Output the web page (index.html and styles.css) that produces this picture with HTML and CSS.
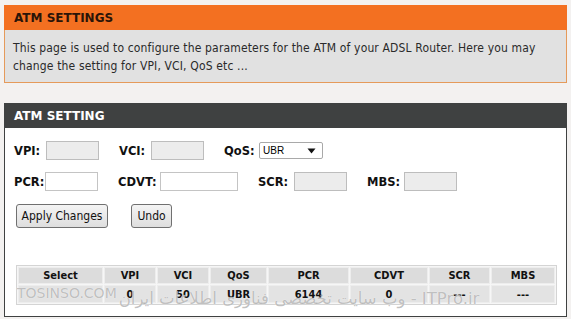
FILE: index.html
```html
<!DOCTYPE html>
<html>
<head>
<meta charset="utf-8">
<link rel="stylesheet" href="styles.css">
</head>
<body>
<div class="page">
  <section class="box box-info">
    <div class="box-head orange">ATM SETTINGS</div>
    <div class="info-body">This page is used to configure the parameters for the ATM of your ADSL Router. Here you may change the setting for VPI, VCI, QoS etc ...</div>
  </section>

  <section class="box box-form">
    <div class="box-head dark">ATM SETTING</div>
    <div class="form-body">
      <div class="row">
        <label class="field"><span class="lbl w32">VPI:</span><span class="inp dis"></span></label>
        <label class="field"><span class="lbl w32">VCI:</span><span class="inp dis"></span></label>
        <label class="field"><span class="lbl w35">QoS:</span>
          <span class="sel"><span>UBR</span><svg width="9" height="6" viewBox="0 0 9 6"><path d="M0.5 0.5 H8.5 L4.5 5.5 Z" fill="#111"/></svg></span>
        </label>
      </div>
      <div class="row row2">
        <label class="field"><span class="lbl w31">PCR:</span><span class="inp"></span></label>
        <label class="field"><span class="lbl w42">CDVT:</span><span class="inp wide"></span></label>
        <label class="field"><span class="lbl w36">SCR:</span><span class="inp dis"></span></label>
        <label class="field"><span class="lbl w37">MBS:</span><span class="inp dis"></span></label>
      </div>
      <div class="buttons">
        <span class="btn apply">Apply Changes</span>
        <span class="btn undo">Undo</span>
      </div>
      <div class="table-wrap">
        <table class="grid">
          <tr>
            <th class="c-sel">Select</th><th class="c-vpi">VPI</th><th class="c-vci">VCI</th><th class="c-qos">QoS</th><th class="c-pcr">PCR</th><th class="c-cdvt">CDVT</th><th class="c-scr">SCR</th><th class="c-mbs">MBS</th>
          </tr>
          <tr>
            <td></td><td>0</td><td>50</td><td>UBR</td><td>6144</td><td>0</td><td>---</td><td>---</td>
          </tr>
        </table>
        <div class="watermark"><span class="wm-en">TOSINSO.COM</span><span class="wm-fa" dir="ltr">وب سایت تخصصی فناوری اطلاعات ایران - ITPro.ir</span></div>
      </div>
    </div>
  </section>
</div>
</body>
</html>
```

FILE: styles.css
```css
html, body {
  margin: 0;
  padding: 0;
  background: #f3f1f0;
}
body {
  font-family: "DejaVu Sans Condensed", "DejaVu Sans", sans-serif;
  color: #222;
}
.page {
  padding: 5px 4px 0 4px;
  display: flex;
  flex-direction: column;
  gap: 20px;
}
.box-info {
  border: 1px solid #e59a5a;
  background: #e1e1e1;
}
.box-head {
  height: 24px;
  display: flex;
  align-items: center;
  padding-left: 9px;
  font-family: "DejaVu Sans", sans-serif;
  font-weight: bold;
  font-size: 12px;
}
.box-head.orange {
  background: #f37021;
  color: #2a1408;
  margin: -1px -1px 0 -1px;
  height: 25px;
  padding-left: 10px;
}
.info-body {
  padding: 9px 8px 7px 8px;
  font-size: 12px;
  line-height: 18px;
  letter-spacing: 0.15px;
  color: #2a2a2a;
}
.box-form {
  border: 1px solid #3f4141;
  background: #fff;
}
.box-head.dark {
  background: #3f4141;
  color: #fff;
}
.form-body {
  padding: 13px 0 11px 9px;
}
.row {
  display: flex;
  align-items: center;
  gap: 20px;
  height: 19px;
  margin-bottom: 12px;
}
.row.row2 {
  margin-bottom: 13px;
}
.field {
  display: flex;
  align-items: center;
}
.lbl {
  font-family: "DejaVu Sans", sans-serif;
  font-weight: bold;
  font-size: 11.5px;
  color: #111;
  white-space: nowrap;
}
.w31 { width: 31px; }
.w32 { width: 32px; }
.w35 { width: 35px; }
.w36 { width: 36px; }
.w37 { width: 37px; }
.w42 { width: 42px; }
.inp {
  width: 53px;
  height: 19px;
  box-sizing: border-box;
  border: 1px solid #c4c4c4;
  background: #fff;
}
.inp.dis {
  background: #ececec;
  border-color: #bdbdbd;
}
.inp.wide { width: 78px; }
.sel {
  width: 64px;
  height: 17px;
  box-sizing: border-box;
  border: 1px solid #a9a9a9;
  border-radius: 2px;
  background: #fff;
  display: flex;
  align-items: center;
  justify-content: space-between;
  padding: 0 6px 0 3px;
  font-family: "Liberation Sans", sans-serif;
  font-size: 10px;
  color: #000;
}
.buttons {
  display: flex;
  gap: 23px;
  padding-left: 2px;
}
.btn {
  height: 24px;
  box-sizing: border-box;
  border: 1px solid #707070;
  border-radius: 3px;
  background: linear-gradient(#f4f4f4, #dedede);
  display: flex;
  align-items: center;
  justify-content: center;
  font-size: 12px;
  color: #111;
}
.btn.apply { width: 92px; }
.btn.undo { width: 41px; }
.table-wrap {
  position: relative;
  margin-top: 37px;
  padding-left: 2px;
}
.grid {
  border-collapse: separate;
  border-spacing: 1px;
  border: 1px solid #d4d4d4;
  background: #f6f6f6;
  font-family: "DejaVu Sans Condensed", "DejaVu Sans", sans-serif;
  font-weight: bold;
  font-size: 11px;
  color: #111;
}
.grid th, .grid td {
  background: #dcdcdc;
  text-align: center;
  padding: 0;
  height: 15px;
  line-height: 15px;
  border: 1px solid #ededed;
}
.grid td { background: #e3e3e3; height: 16px; }
.c-sel { width: 83px; }
.c-vpi { width: 50px; }
.c-vci { width: 50px; }
.c-qos { width: 55px; }
.c-pcr { width: 79px; }
.c-cdvt { width: 76px; }
.c-scr { width: 59px; }
.c-mbs { width: 62px; }
.watermark {
  position: absolute;
  left: 3px;
  top: 20px;
  display: flex;
  align-items: flex-start;
  gap: 2px;
  pointer-events: none;
  color: rgba(140,140,140,0.55);
  font-family: "DejaVu Sans", sans-serif;
  text-shadow: 0 0 1px #fff;
}
.wm-en { font-size: 14px; line-height: 16px; }
.wm-fa { font-size: 16.5px; line-height: 20px; margin-top: 4px; }
```
